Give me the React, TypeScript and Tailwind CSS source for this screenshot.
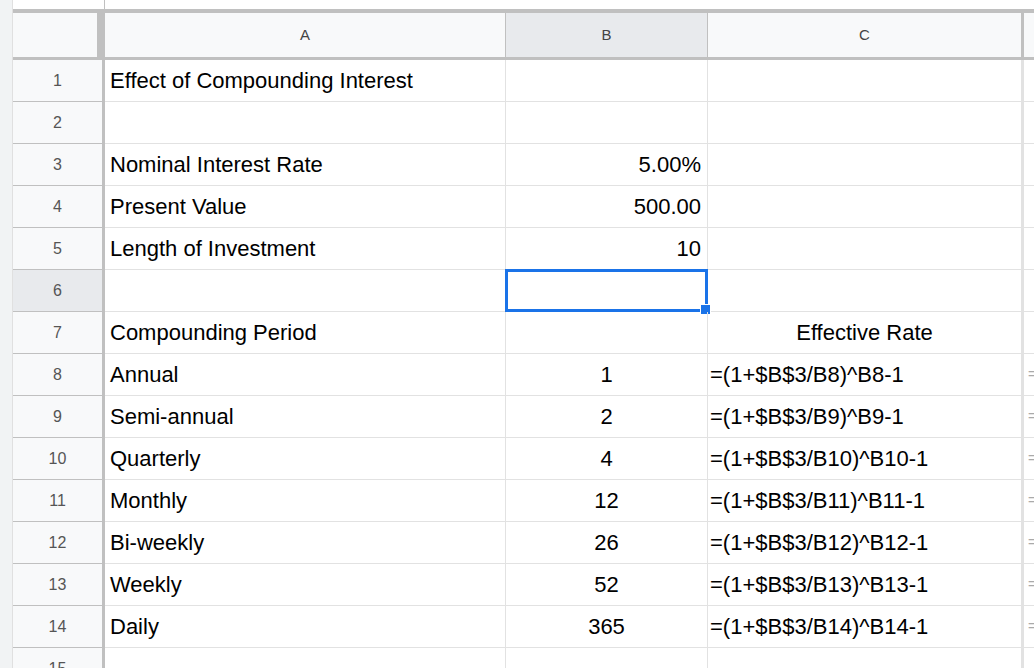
const rows: [string, string, string][] = [
  ["Effect of Compounding Interest", "", ""],
  ["", "", ""],
  ["Nominal Interest Rate", "5.00%", ""],
  ["Present Value", "500.00", ""],
  ["Length of Investment", "10", ""],
  ["", "", ""],
  ["Compounding Period", "", "Effective Rate"],
  ["Annual", "1", "=(1+$B$3/B8)^B8-1"],
  ["Semi-annual", "2", "=(1+$B$3/B9)^B9-1"],
  ["Quarterly", "4", "=(1+$B$3/B10)^B10-1"],
  ["Monthly", "12", "=(1+$B$3/B11)^B11-1"],
  ["Bi-weekly", "26", "=(1+$B$3/B12)^B12-1"],
  ["Weekly", "52", "=(1+$B$3/B13)^B13-1"],
  ["Daily", "365", "=(1+$B$3/B14)^B14-1"],
  ["", "", ""],
];

export default function App() {
  const cols = "grid-cols-[92px_401px_202px_316px_40px]";
  return (
    <div className="w-[1034px] h-[668px] overflow-hidden bg-white flex" style={{ fontFamily: "Arial, 'Liberation Sans', sans-serif" }}>
      <div className="w-[13px] shrink-0 bg-[#f1f3f4] border-r border-[#e0e0e0]" />
      <div className="flex-1 flex flex-col min-h-0">
        <div className="h-[9px] shrink-0 border-b-[4px] border-[#c0c0c0] box-content flex">
          <div className="w-[92px] border-r border-[#c0c0c0]" />
        </div>
        <div className={`grid ${cols} h-[47px] shrink-0 text-[15px] text-[#444] bg-[#f8f9fa] border-b-[3px] border-[#c0c0c0]`}>
          <div className="border-r-[8px] border-[#c0c0c0] bg-[#f8f9fa]" />
          <div className="border-r border-[#c0c0c0] flex items-center justify-center">A</div>
          <div className="border-r border-[#c0c0c0] flex items-center justify-center bg-[#e8eaed]">B</div>
          <div className="border-r-[3px] border-[#c0c0c0] flex items-center justify-center">C</div>
          <div />
        </div>
        {rows.map((r, i) => (
          <div key={i} className={`grid ${cols} h-[42px] text-[22px] text-black shrink-0`}>
            <div className={`border-r-[3px] border-b border-r-[#c0c0c0] border-b-[#c0c0c0] flex items-center justify-center text-[16px] text-[#555] ${i === 5 ? "bg-[#e8eaed]" : "bg-[#f8f9fa]"}`}>{i + 1}</div>
            <div className="border-r border-b border-[#e2e2e2] flex items-center px-[5px] whitespace-nowrap">{r[0]}</div>
            <div className="relative border-r border-b border-[#e2e2e2] flex items-center px-[6px] whitespace-nowrap" style={{ justifyContent: i >= 7 ? "center" : "flex-end" }}>
              {r[1]}
              {i === 5 && (
                <div className="absolute -left-px -top-px w-[203px] h-[43px] border-[3px] border-[#1a73e8]">
                  <div className="absolute -right-[6px] -bottom-[6px] w-[11px] h-[11px] bg-[#1a73e8] border border-white" />
                </div>
              )}
            </div>
            <div className="border-r-[3px] border-b border-[#e2e2e2] flex items-center px-[2px] whitespace-nowrap overflow-hidden" style={{ justifyContent: i === 6 ? "center" : "flex-start" }}>{r[2]}</div>
            <div className="border-b border-[#e2e2e2] flex items-center pl-[4px] text-[#aaa] text-[14px] overflow-hidden">{i >= 7 && i <= 13 ? "=" : ""}</div>
          </div>
        ))}
      </div>
    </div>
  );
}
